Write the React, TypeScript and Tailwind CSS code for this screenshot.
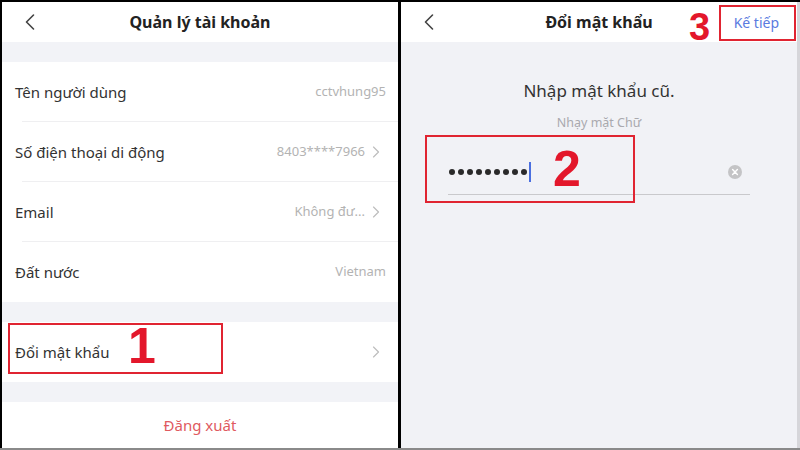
import { ChevronLeft, ChevronRight } from "lucide-react";

const font = { fontFamily: '"Noto Sans", "Open Sans", sans-serif' };

type RowProps = { label: string; value?: string; arrow?: boolean; last?: boolean };

const Row = ({ label, value, arrow, last }: RowProps) => (
  <div className="relative flex h-[60px] items-center justify-between bg-white pl-[13px] pr-[12px]">
    <span className="text-[15px] text-[#333]">{label}</span>
    <span className="flex items-center gap-[1px] text-[13px] text-[#b3b3b3]">
      {value}
      {arrow && <ChevronRight className="h-[20px] w-[20px] text-[#bdbdbd]" strokeWidth={1.4} />}
    </span>
    {!last && <div className="absolute bottom-0 left-[20px] right-0 h-px bg-[#efeff1]" />}
  </div>
);

const Step = ({ n, className }: { n: string; className: string }) => (
  <span
    className={`absolute font-bold leading-none text-[#e3172b] ${className}`}
    style={{ fontFamily: '"Liberation Sans", Arial, sans-serif' }}
  >
    {n}
  </span>
);

const AccountPanel = () => (
  <div className="relative flex h-full w-[396px] flex-col bg-white">
    <div className="relative flex h-[40px] items-center justify-center bg-white">
      <ChevronLeft className="absolute left-[14px] h-[28px] w-[28px] text-[#444]" strokeWidth={1.4} />
      <span className="text-[16px] font-bold text-[#222]">Quản lý tài khoản</span>
    </div>
    <div className="h-[20px] bg-[#f2f3f7]" />
    <Row label="Tên người dùng" value="cctvhung95" />
    <Row label="Số điện thoại di động" value="8403****7966" arrow />
    <Row label="Email" value="Không đư..." arrow />
    <Row label="Đất nước" value="Vietnam" last />
    <div className="h-[20px] bg-[#f2f3f7]" />
    <Row label="Đổi mật khẩu" arrow last />
    <div className="h-[20px] bg-[#f2f3f7]" />
    <div className="flex flex-1 items-center justify-center bg-white text-[15px] text-[#e05a5f]">
      Đăng xuất
    </div>

    <div className="absolute left-[6px] top-[321px] h-[51px] w-[215px] border-2 border-[#e02431]" />
    <Step n="1" className="left-[126px] top-[319px] text-[50px]" />
  </div>
);

const PasswordPanel = () => (
  <div className="relative flex h-full w-[396px] flex-col bg-[#f1f2f6]">
    <div className="relative flex h-[40px] items-center justify-center bg-white">
      <ChevronLeft className="absolute left-[14px] h-[28px] w-[28px] text-[#444]" strokeWidth={1.4} />
      <span className="text-[16px] font-bold text-[#222]">Đổi mật khẩu</span>
      <span className="absolute right-[18px] text-[14px] text-[#5a7be0]">Kế tiếp</span>
    </div>
    <div className="flex flex-col items-center pt-[36px]">
      <span className="text-[17px] text-[#333]">Nhập mật khẩu cũ.</span>
      <span className="mt-[10px] text-[12.5px] text-[#a9a9ae]">Nhạy mặt Chữ</span>
    </div>
    <div className="mx-[47px] mt-[17px] flex h-[46px] items-center justify-between border-b border-[#c9c9cc] pl-[1px] pr-[8px]">
      <div className="flex items-center">
        <div className="flex gap-[3px]">
          {Array.from({ length: 9 }).map((_, i) => (
            <span key={i} className="h-[6px] w-[6px] rounded-full bg-[#2a2a2a]" />
          ))}
        </div>
        <span className="ml-[2px] h-[20px] w-[2px] bg-[#4a6fe0]" />
      </div>
      <span className="flex h-[14px] w-[14px] items-center justify-center rounded-full bg-[#c4c4c6]">
        <svg viewBox="0 0 10 10" className="h-[8px] w-[8px]">
          <path d="M2 2 L8 8 M8 2 L2 8" stroke="#fff" strokeWidth="1.8" strokeLinecap="round" />
        </svg>
      </span>
    </div>

    <div className="absolute left-[24px] top-[133px] h-[68px] w-[210px] border-2 border-[#e02431]" />
    <Step n="2" className="left-[152px] top-[142px] text-[50px]" />
    <div className="absolute left-[318px] top-[3px] h-[36px] w-[77px] border-2 border-[#e02431]" />
    <Step n="3" className="left-[288px] top-[6px] text-[38px]" />
  </div>
);

export default function App() {
  return (
    <div className="flex h-[450px] w-[800px] flex-col bg-black" style={font}>
      <div className="h-[2px]" />
      <div className="flex h-[446px] pl-[2px]">
        <AccountPanel />
        <div className="w-[3px]" />
        <PasswordPanel />
        <div className="w-[3px] bg-[#d6d6da]" />
      </div>
      <div className="h-[2px] bg-[#8a8a8a]" />
    </div>
  );
}
